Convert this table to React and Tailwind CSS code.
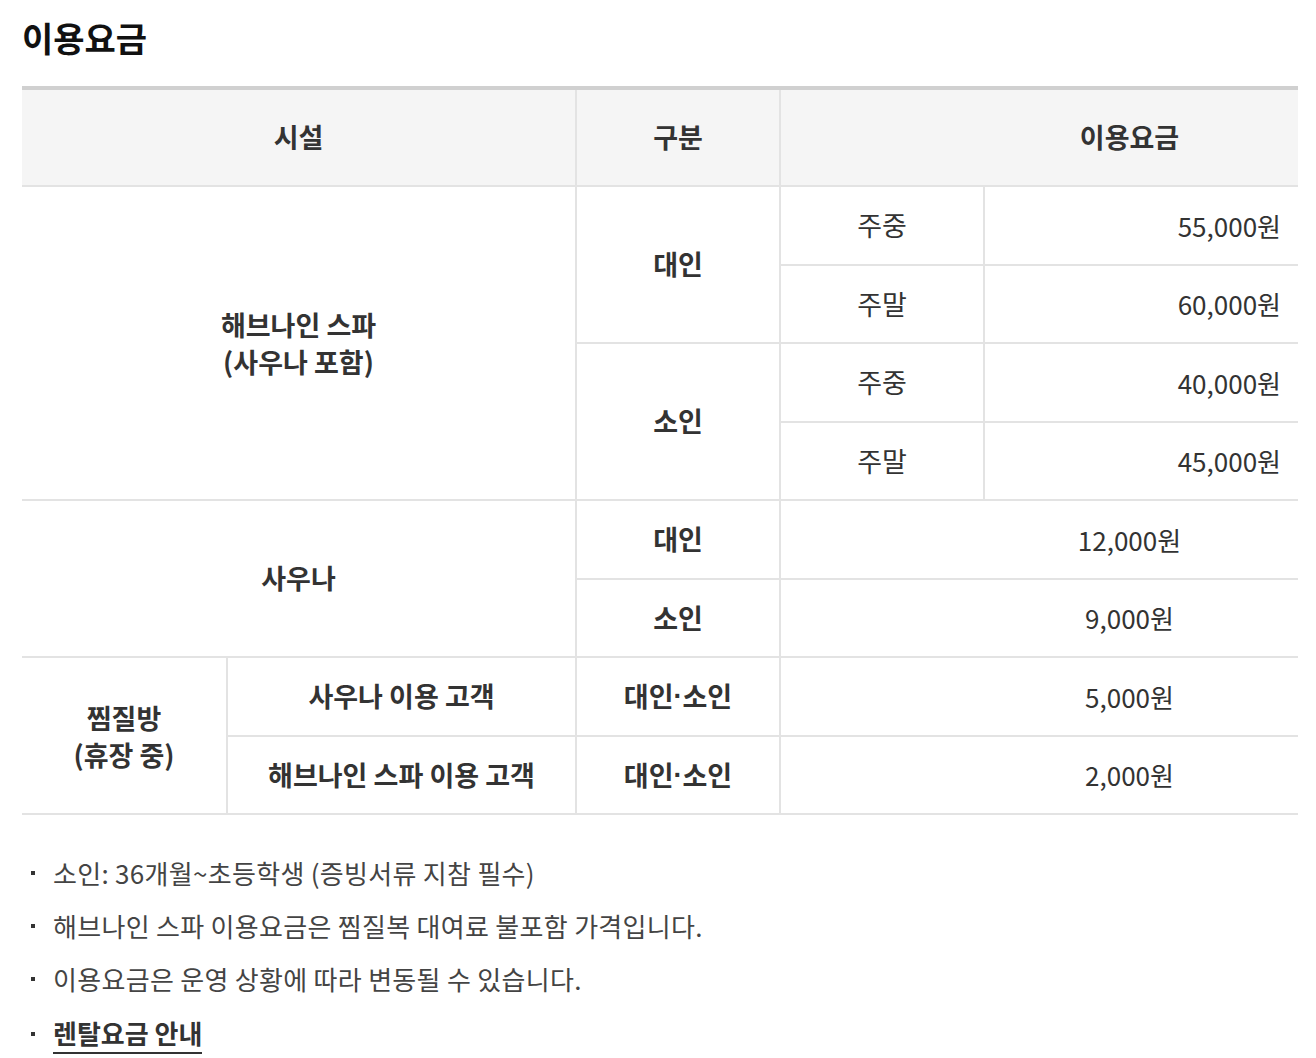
import React from "react";

const font = { fontFamily: '"Noto Sans CJK KR", "Noto Sans", sans-serif' };

function Cell({ className = "", children }) {
  return (
    <div className={`flex items-center justify-center bg-white text-center ${className}`}>
      {children}
    </div>
  );
}

function Head({ className = "", children }) {
  return (
    <div className={`flex items-center justify-center bg-[#f5f5f5] text-[27px] font-bold text-[#333] ${className}`}>
      {children}
    </div>
  );
}

const Dot = () => <span className="font-['Liberation_Sans']">·</span>;

const notes = [
  "소인: 36개월~초등학생 (증빙서류 지참 필수)",
  "해브나인 스파 이용요금은 찜질복 대여료 불포함 가격입니다.",
  "이용요금은 운영 상황에 따라 변동될 수 있습니다.",
];

export default function App() {
  return (
    <div className="min-h-screen bg-white px-[22px] pt-[14px] text-[#333]" style={font}>
      <h2 className="text-[34px] font-bold leading-[48px] text-[#111]">이용요금</h2>

      <div className="mt-[24px] grid w-[1276px] grid-cols-[204px_347px_202px_202px_313px] grid-rows-[95px_repeat(8,76.5px)] gap-[2px] border-t-4 border-b-2 border-t-[#d0d0d0] border-b-[#e3e3e3] bg-[#e3e3e3] text-[26px]">
        {/* header */}
        <Head className="col-span-2">시설</Head>
        <Head>구분</Head>
        <Head className="col-span-2 pl-[180px]">이용요금</Head>

        {/* 해브나인 스파 */}
        <Cell className="col-span-2 row-span-4 text-[27px] font-bold leading-[37px]">
          해브나인 스파
          <br />
          (사우나 포함)
        </Cell>
        <Cell className="row-span-2 text-[27px] font-bold">대인</Cell>
        <Cell className="text-[27px]">주중</Cell>
        <Cell className="justify-end pr-[17px]">55,000원</Cell>
        <Cell className="text-[27px]">주말</Cell>
        <Cell className="justify-end pr-[17px]">60,000원</Cell>
        <Cell className="row-span-2 text-[27px] font-bold">소인</Cell>
        <Cell className="text-[27px]">주중</Cell>
        <Cell className="justify-end pr-[17px]">40,000원</Cell>
        <Cell className="text-[27px]">주말</Cell>
        <Cell className="justify-end pr-[17px]">45,000원</Cell>

        {/* 사우나 */}
        <Cell className="col-span-2 row-span-2 text-[27px] font-bold">사우나</Cell>
        <Cell className="text-[27px] font-bold">대인</Cell>
        <Cell className="col-span-2 pl-[180px]">12,000원</Cell>
        <Cell className="text-[27px] font-bold">소인</Cell>
        <Cell className="col-span-2 pl-[180px]">9,000원</Cell>

        {/* 찜질방 */}
        <Cell className="row-span-2 text-[27px] font-bold leading-[37px]">
          찜질방
          <br />
          (휴장 중)
        </Cell>
        <Cell className="text-[27px] font-bold">사우나 이용 고객</Cell>
        <Cell className="text-[27px] font-bold">
          대인<Dot />소인
        </Cell>
        <Cell className="col-span-2 pl-[180px]">5,000원</Cell>
        <Cell className="text-[27px] font-bold">해브나인 스파 이용 고객</Cell>
        <Cell className="text-[27px] font-bold">
          대인<Dot />소인
        </Cell>
        <Cell className="col-span-2 pl-[180px]">2,000원</Cell>
      </div>

      <ul className="mt-[40px] flex flex-col gap-[17px] text-[26px] leading-[36px] tracking-[0.3px] text-[#444]">
        {notes.map((n) => (
          <li key={n} className="flex items-center">
            <span className="ml-[9px] mr-[18px] h-[4px] w-[4px] shrink-0 bg-[#333]" />
            {n}
          </li>
        ))}
        <li className="flex items-center">
          <span className="ml-[9px] mr-[18px] h-[4px] w-[4px] shrink-0 bg-[#333]" />
          <a href="#" className="border-b-2 border-[#333] font-bold leading-[38px] tracking-normal text-[#333]">
            렌탈요금 안내
          </a>
        </li>
      </ul>
    </div>
  );
}
